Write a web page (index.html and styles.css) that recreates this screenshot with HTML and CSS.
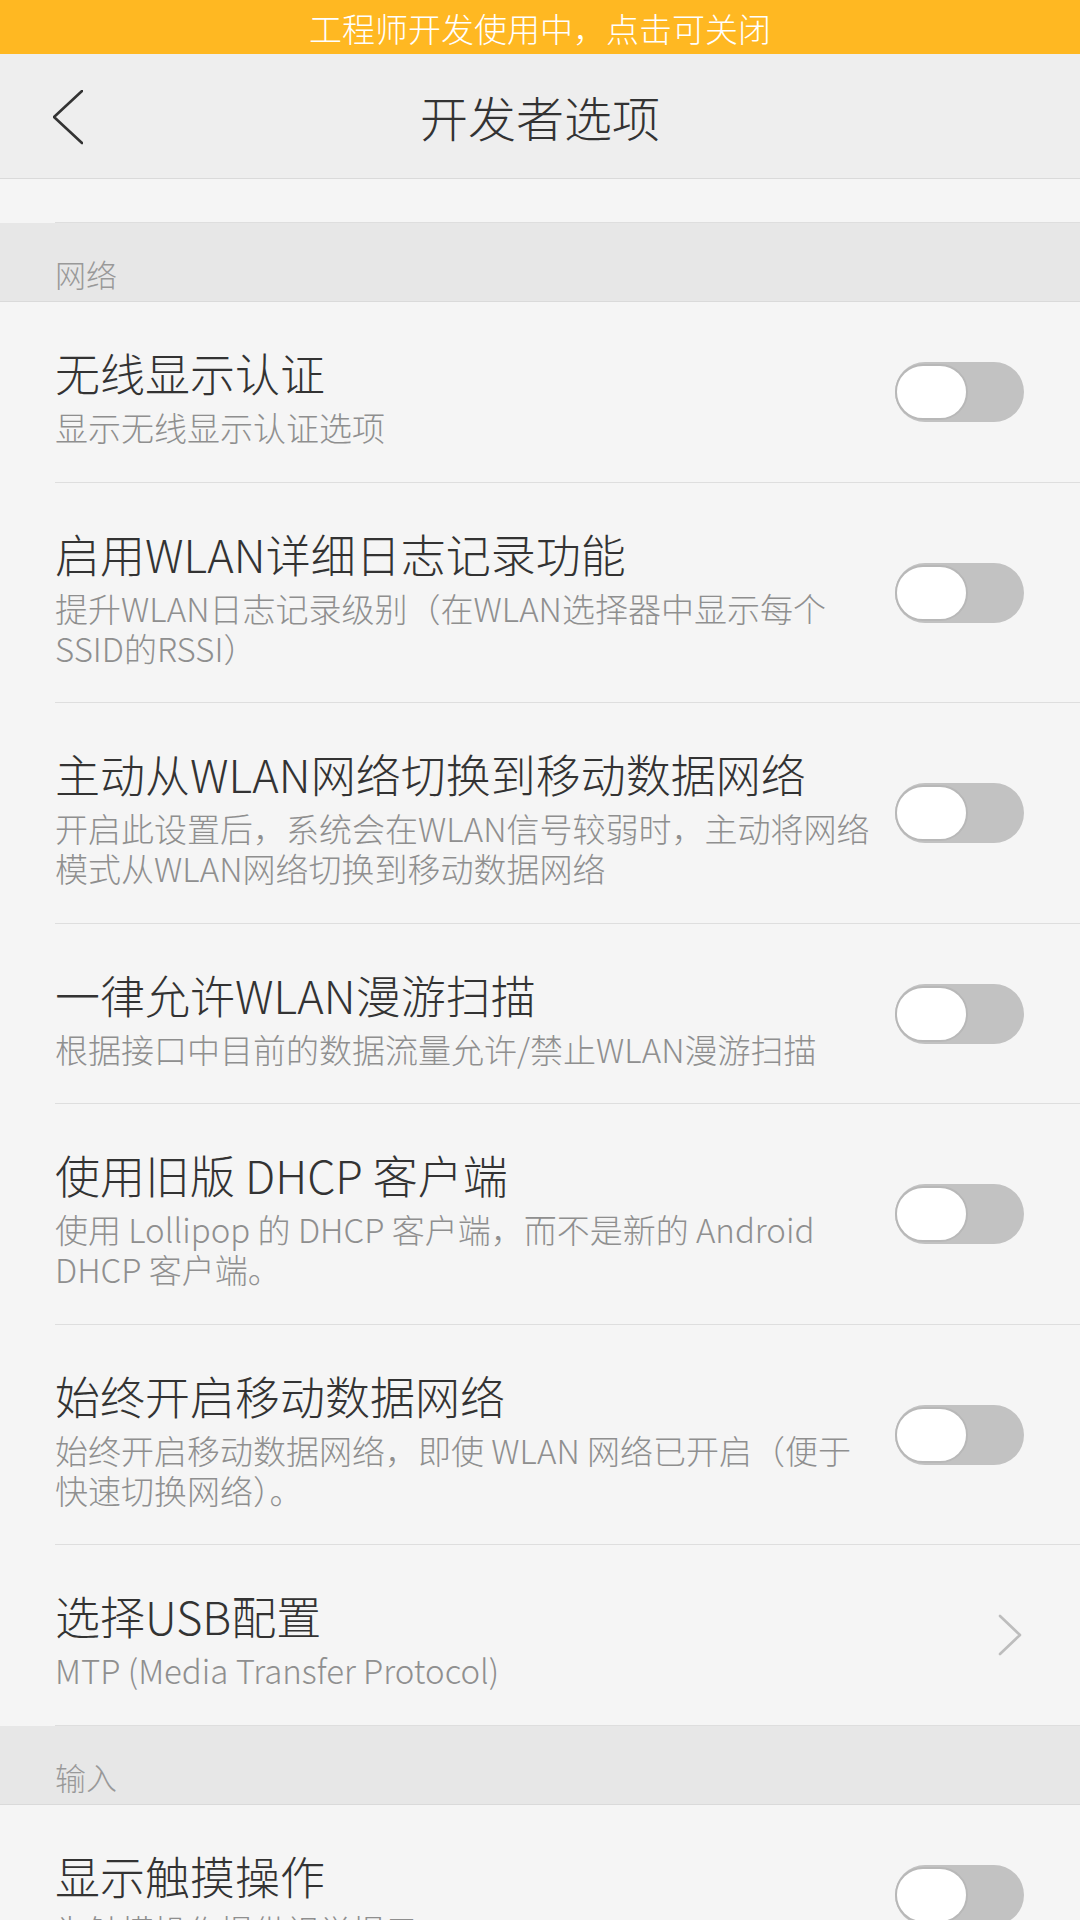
FILE: index.html
```html
<!DOCTYPE html>
<html lang="zh-CN">
<head>
<meta charset="utf-8">
<title>开发者选项</title>
<link rel="stylesheet" href="styles.css">
</head>
<body>
<div class="banner">工程师开发使用中，点击可关闭</div>
<header class="appbar">
  <svg class="back" viewBox="0 0 30 56" width="30" height="56"><polyline points="29,1 1,27 29,53" fill="none" stroke="#333" stroke-width="2.6" stroke-linecap="round" stroke-linejoin="round"/></svg>
  <h1 class="appbar-title">开发者选项</h1>
</header>
<main class="list">
  <div class="stub"><div class="stub-inner"></div></div>

  <div class="section">网络</div>

  <div class="item"><div class="item-inner">
    <div class="texts"><div class="title">无线显示认证</div><div class="sub">显示无线显示认证选项</div></div>
    <span class="switch"><span class="knob"></span></span>
  </div></div>

  <div class="item"><div class="item-inner">
    <div class="texts"><div class="title">启用WLAN详细日志记录功能</div><div class="sub">提升WLAN日志记录级别（在WLAN选择器中显示每个SSID的RSSI）</div></div>
    <span class="switch"><span class="knob"></span></span>
  </div></div>

  <div class="item"><div class="item-inner">
    <div class="texts"><div class="title">主动从WLAN网络切换到移动数据网络</div><div class="sub">开启此设置后，系统会在WLAN信号较弱时，主动将网络模式从WLAN网络切换到移动数据网络</div></div>
    <span class="switch"><span class="knob"></span></span>
  </div></div>

  <div class="item"><div class="item-inner">
    <div class="texts"><div class="title">一律允许WLAN漫游扫描</div><div class="sub">根据接口中目前的数据流量允许/禁止WLAN漫游扫描</div></div>
    <span class="switch"><span class="knob"></span></span>
  </div></div>

  <div class="item"><div class="item-inner">
    <div class="texts"><div class="title">使用旧版 DHCP 客户端</div><div class="sub">使用 Lollipop 的 DHCP 客户端，而不是新的 Android DHCP 客户端。</div></div>
    <span class="switch"><span class="knob"></span></span>
  </div></div>

  <div class="item"><div class="item-inner">
    <div class="texts"><div class="title">始终开启移动数据网络</div><div class="sub">始终开启移动数据网络，即使 WLAN 网络已开启（便于快速切换网络）。</div></div>
    <span class="switch"><span class="knob"></span></span>
  </div></div>

  <div class="item"><div class="item-inner">
    <div class="texts"><div class="title">选择USB配置</div><div class="sub">MTP (Media Transfer Protocol)</div></div>
    <svg class="arrow" viewBox="0 0 24 42" width="24" height="42"><polyline points="2,2 22,21 2,40" fill="none" stroke="#BDBDBD" stroke-width="2.6" stroke-linecap="round" stroke-linejoin="round"/></svg>
  </div></div>

  <div class="section">输入</div>

  <div class="item"><div class="item-inner">
    <div class="texts"><div class="title">显示触摸操作</div><div class="sub">为触摸操作提供视觉提示</div></div>
    <span class="switch"><span class="knob"></span></span>
  </div></div>
</main>
</body>
</html>
```

FILE: styles.css
```css
html, body {
  margin: 0;
  padding: 0;
}
body {
  width: 1080px;
  height: 1920px;
  overflow: hidden;
  background: #F5F5F5;
  font-family: "Noto Sans CJK SC", "Noto Sans", sans-serif;
  font-weight: 300;
}
.banner {
  height: 54px;
  background: #FFB822;
  color: #FFFFFF;
  font-size: 33px;
  line-height: 56px;
  text-align: center;
}
.appbar {
  height: 124px;
  background: #EEEEEE;
  border-bottom: 1px solid #DADADA;
  display: flex;
  align-items: center;
  justify-content: center;
  position: relative;
}
.back {
  position: absolute;
  left: 53px;
  top: 36px;
}
.appbar-title {
  margin: 0;
  font-size: 48px;
  font-weight: 300;
  color: #333333;
  line-height: 60px;
}
.stub {
  height: 44px;
  background: #F5F5F5;
}
.stub-inner {
  margin-left: 55px;
  height: 43px;
  border-bottom: 1px solid #DEDEDE;
}
.section {
  height: 79px;
  box-sizing: border-box;
  padding: 30px 0 0 55px;
  background: #E7E7E7;
  border-bottom: 1px solid #DADADA;
  color: #999999;
  font-size: 31px;
  line-height: 42px;
}
.item {
  background: #F5F5F5;
}
.item-inner {
  margin-left: 55px;
  padding: 42px 56px 34px 0;
  border-bottom: 1px solid #DEDEDE;
  display: flex;
  align-items: center;
  gap: 12px;
}
.item:nth-of-type(odd) .item-inner {
  padding-bottom: 35px;
}
.texts {
  flex: 1;
  min-width: 0;
}
.title {
  font-size: 45px;
  line-height: 58px;
  color: #333333;
}
.sub {
  margin-top: 5px;
  font-size: 33px;
  line-height: 40px;
  color: #8F8F8F;
}
.switch {
  position: relative;
  flex: none;
  width: 129px;
  height: 60px;
  border-radius: 30px;
  background: #C2C2C2;
  margin-top: -8px;
}
.knob {
  position: absolute;
  left: 0;
  top: 2px;
  width: 73px;
  height: 56px;
  box-sizing: border-box;
  border-radius: 28px;
  background: #FFFFFF;
  border: 2px solid #B8B8B8;
}
.arrow {
  flex: none;
  margin-right: 2px;
  margin-top: -8px;
}
```
